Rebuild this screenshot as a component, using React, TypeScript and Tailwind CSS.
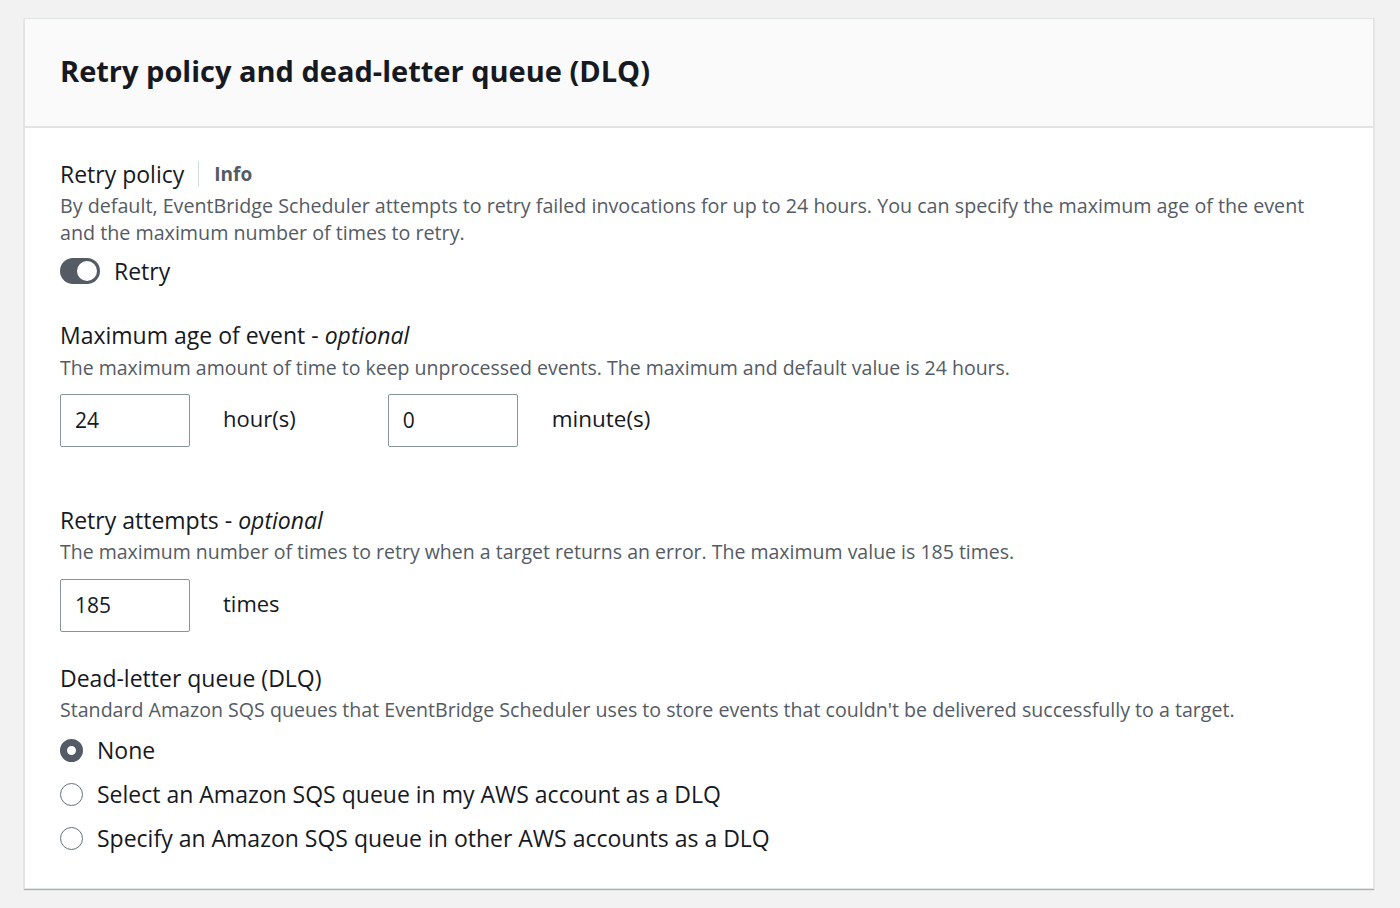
import React from 'react';

const font = { fontFamily: '"Open Sans", "Noto Sans", Arial, sans-serif' };

const TextInput: React.FC<{ value: string }> = ({ value }) => (
  <div className="w-[130px] h-[53px] border border-[#879596] rounded-[2px] bg-white flex items-center px-[14px] text-[21px] leading-none text-[#16191f]">
    {value}
  </div>
);

const Radio: React.FC<{ checked?: boolean; label: string }> = ({ checked, label }) => (
  <div className="flex items-center gap-[14px] h-[44px]">
    {checked ? (
      <span className="w-[23px] h-[23px] rounded-full border-[7px] border-[#545b64] bg-white" />
    ) : (
      <span className="w-[23px] h-[23px] rounded-full border-[1.5px] border-[#687078] bg-white" />
    )}
    <span className="text-[23px] text-[#16191f]">{label}</span>
  </div>
);

export default function App() {
  return (
    <div className="min-h-screen bg-[#f2f2f2] pt-[18px] pl-[24px]" style={font}>
      <div className="w-[1350px] bg-white border border-[#e1e4e4] shadow-[0_1px_1px_rgba(0,28,36,0.3)]">
        <div className="h-[109px] bg-[#fafafa] border-b-2 border-[#e4e4e4] flex items-center px-[35px]">
          <h2 className="text-[29px] font-bold text-[#16191f] -mt-[4px]">
            Retry policy and dead-letter queue (DLQ)
          </h2>
        </div>

        <div className="px-[35px] pt-[30px] pb-[28px]">
          {/* Retry policy */}
          <div className="flex items-center h-[32px]">
            <span className="text-[23px] text-[#16191f]">Retry policy</span>
            <span className="ml-[14px] h-[26px] border-l border-[#d5dbdb]" />
            <span className="ml-[15px] text-[19px] font-bold text-[#545b64]">Info</span>
          </div>
          <p className="text-[19.7px] leading-[27px] text-[#545b64] mt-[2px] pr-[12px]">
            By default, EventBridge Scheduler attempts to retry failed invocations for up to 24 hours. You can specify the maximum age of the event and the maximum number of times to retry.
          </p>
          <div className="flex items-center gap-[14px] mt-[10px] h-[30px]">
            <span className="w-[40px] h-[26px] rounded-full bg-[#545b64] flex items-center justify-end pr-[3px]">
              <span className="w-[20px] h-[20px] rounded-full bg-white" />
            </span>
            <span className="text-[23px] text-[#16191f]">Retry</span>
          </div>

          {/* Maximum age */}
          <div className="mt-[33px] text-[23px] text-[#16191f] leading-[32px]">
            Maximum age of event - <i>optional</i>
          </div>
          <p className="text-[19.5px] leading-[27px] text-[#545b64] mt-[3px]">
            The maximum amount of time to keep unprocessed events. The maximum and default value is 24 hours.
          </p>
          <div className="flex items-start mt-[13px]">
            <TextInput value="24" />
            <span className="ml-[33px] mt-[8px] text-[22px] text-[#16191f]">hour(s)</span>
            <div className="ml-[92px]">
              <TextInput value="0" />
            </div>
            <span className="ml-[34px] mt-[8px] text-[22.5px] text-[#16191f]">minute(s)</span>
          </div>

          {/* Retry attempts */}
          <div className="mt-[57px] text-[23px] text-[#16191f] leading-[32px]">
            Retry attempts - <i>optional</i>
          </div>
          <p className="text-[19.5px] leading-[27px] text-[#545b64] mt-[2px]">
            The maximum number of times to retry when a target returns an error. The maximum value is 185 times.
          </p>
          <div className="flex items-start mt-[14px]">
            <TextInput value="185" />
            <span className="ml-[33px] mt-[8px] text-[22px] text-[#16191f]">times</span>
          </div>

          {/* DLQ */}
          <div className="mt-[30px] text-[23px] text-[#16191f] leading-[32px]">
            Dead-letter queue (DLQ)
          </div>
          <p className="text-[19.6px] leading-[27px] text-[#545b64] mt-[2px]">
            Standard Amazon SQS queues that EventBridge Scheduler uses to store events that couldn't be delivered successfully to a target.
          </p>
          <div className="mt-[5px] flex flex-col">
            <Radio checked label="None" />
            <Radio label="Select an Amazon SQS queue in my AWS account as a DLQ" />
            <Radio label="Specify an Amazon SQS queue in other AWS accounts as a DLQ" />
          </div>
        </div>
      </div>
    </div>
  );
}
